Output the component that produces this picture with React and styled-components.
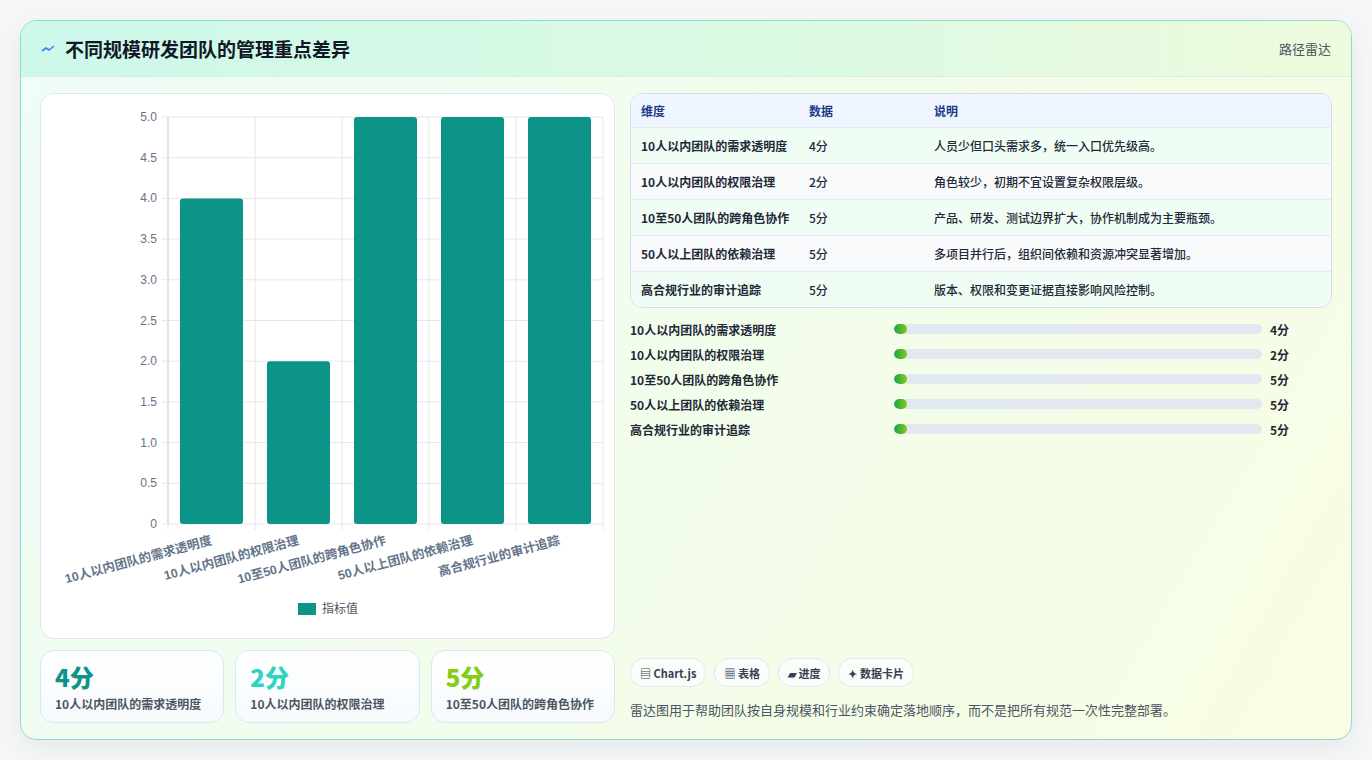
import styled, { createGlobalStyle } from 'styled-components'

const Global = createGlobalStyle`
  body {
    margin: 0;
    background: #f4f6f8;
    font-family: "Noto Sans CJK SC", "Noto Sans", sans-serif;
  }
`

const items = [
  { name: '10人以内团队的需求透明度', value: 4, note: '人员少但口头需求多，统一入口优先级高。' },
  { name: '10人以内团队的权限治理', value: 2, note: '角色较少，初期不宜设置复杂权限层级。' },
  { name: '10至50人团队的跨角色协作', value: 5, note: '产品、研发、测试边界扩大，协作机制成为主要瓶颈。' },
  { name: '50人以上团队的依赖治理', value: 5, note: '多项目并行后，组织间依赖和资源冲突显著增加。' },
  { name: '高合规行业的审计追踪', value: 5, note: '版本、权限和变更证据直接影响风险控制。' },
]

const Page = styled.div`
  padding: 20px;
  height: 760px;
  box-sizing: border-box;
`

const Panel = styled.div`
  height: 720px;
  box-sizing: border-box;
  border: 1px solid #8fdcc8;
  border-radius: 16px;
  background: linear-gradient(120deg, #effdf8 0%, #f3fde9 60%, #f8fde4 100%);
  box-shadow: 0 8px 24px rgba(0, 0, 0, 0.06);
  overflow: hidden;
  display: flex;
  flex-direction: column;
`

const Header = styled.div`
  height: 55px;
  flex: none;
  display: flex;
  align-items: center;
  justify-content: space-between;
  padding: 0 20px;
  background: linear-gradient(90deg, #cdf8ea 0%, #dcfae3 60%, #eefadc 100%);
  border-bottom: 1px solid #d6efe4;
`

const Title = styled.h1`
  margin: 0;
  font-size: 19px;
  font-weight: 700;
  color: #111827;
  display: flex;
  align-items: center;
  gap: 10px;
`

const Tag = styled.span`
  font-size: 13px;
  color: #4b5563;
`

const Body = styled.div`
  flex: 1;
  display: grid;
  grid-template-columns: 575px 1fr;
  gap: 15px;
  padding: 16px 19px 18px 19px;
`

const Left = styled.div`
  display: flex;
  flex-direction: column;
  gap: 11px;
`

const ChartCard = styled.div`
  height: 544px;
  background: #fff;
  border: 1px solid #dfe8ec;
  border-radius: 14px;
`

const Cards = styled.div`
  display: grid;
  grid-template-columns: repeat(3, 1fr);
  gap: 11px;
`

const Stat = styled.div`
  height: 73px;
  box-sizing: border-box;
  padding: 10px 14px;
  border: 1px solid #d8e8ef;
  border-radius: 14px;
  background: linear-gradient(180deg, #ffffff, #f6fafd);
`

const StatValue = styled.div`
  font-size: 24px;
  font-weight: 800;
  line-height: 32px;
  color: ${p => p.$color};
`

const StatLabel = styled.div`
  font-size: 12px;
  font-weight: 600;
  color: #4b5563;
  margin-top: 2px;
`

const Right = styled.div`
  display: flex;
  flex-direction: column;
`

const Table = styled.div`
  border: 1px solid #cfdde8;
  border-radius: 12px;
  overflow: hidden;
  background: #fff;
`

const Row = styled.div`
  display: grid;
  grid-template-columns: 168px 125px 1fr;
  align-items: center;
  height: ${p => (p.$head ? '33px' : '35px')};
  padding: 0 10px;
  font-size: 12px;
  font-weight: ${p => (p.$head ? 600 : 500)};
  color: ${p => (p.$head ? '#1e3a8a' : '#1f2937')};
  background: ${p => (p.$head ? '#eff6ff' : p.$odd ? '#f8fafc' : '#f0fdf4')};
  border-top: ${p => (p.$head ? 'none' : '1px solid #e3eaf0')};
  & > span:first-child { font-weight: 600; }
`

const Bars = styled.div`
  margin-top: 12px;
  display: flex;
  flex-direction: column;
  gap: 7px;
`

const BarRow = styled.div`
  display: grid;
  grid-template-columns: 264px 368px 1fr;
  align-items: center;
  height: 18px;
  font-size: 12px;
  font-weight: 600;
  color: #1f2937;
  & > span:last-child { padding-left: 8px; font-weight: 700; }
`

const Track = styled.div`
  height: 10px;
  border-radius: 5px;
  background: #e2e8f0;
  overflow: hidden;
`

const Fill = styled.div`
  height: 100%;
  border-radius: 5px;
  background: linear-gradient(90deg, #16a34a, #84cc16);
`

const Spacer = styled.div`
  flex: 1;
`

const Chips = styled.div`
  display: flex;
  gap: 8px;
`

const Chip = styled.span`
  height: 27px;
  padding: 0 9px;
  display: inline-flex;
  align-items: center;
  gap: 4px;
  border: 1px solid #e2e8f0;
  border-radius: 14px;
  background: #fbfdfb;
  font-size: 11px;
  font-weight: 700;
  color: #374151;
`

const Desc = styled.p`
  margin: 13px 0 4px;
  font-size: 13px;
  color: #4b5563;
`

function Chart() {
  const x0 = 127, x1 = 562, y0 = 23, y1 = 430
  const cw = (x1 - x0) / 5
  const ticks = [0, 0.5, 1, 1.5, 2, 2.5, 3, 3.5, 4, 4.5, 5]
  const yOf = v => y1 - (v / 5) * (y1 - y0)
  return (
    <svg width="574" height="544" fontFamily='"Liberation Sans", "Noto Sans CJK SC", sans-serif'>
      {ticks.map(t => (
        <g key={t}>
          <line x1={x0 - 6} x2={x1} y1={yOf(t)} y2={yOf(t)} stroke="#e5e7eb" />
          <text x={x0 - 11} y={yOf(t) + 4} fontSize="12" fill="#6b7280" textAnchor="end">
            {t === 0 ? '0' : t.toFixed(1)}
          </text>
        </g>
      ))}
      {[0, 1, 2, 3, 4, 5].map(i => (
        <line key={i} x1={x0 + i * cw} x2={x0 + i * cw} y1={y0} y2={y1 + 6} stroke="#e5e7eb" />
      ))}
      <line x1={x0} x2={x0} y1={y0} y2={y1} stroke="#d1d5db" />
      {items.map((it, i) => {
        const cx = x0 + cw * i + cw / 2
        return (
          <g key={it.name}>
            <rect x={cx - 31.5} y={yOf(it.value)} width="63" height={y1 - yOf(it.value)} rx="3" fill="#0d9488" />
            <text
              x={cx + 1}
              y={y1 + 20}
              fontSize="12.5"
              fontWeight="600"
              fill="#64748b"
              textAnchor="end"
              transform={`rotate(-15 ${cx + 1} ${y1 + 20})`}
            >
              {it.name}
            </text>
          </g>
        )
      })}
      <rect x="257" y="509" width="18" height="12" fill="#0d9488" />
      <text x="281" y="519" fontSize="12" fill="#4b5563">指标值</text>
    </svg>
  )
}

export default function App() {
  const colors = ['#0d9488', '#2dd4bf', '#84cc16']
  return (
    <Page>
      <Global />
      <Panel>
        <Header>
          <Title>
            <svg width="14" height="10" viewBox="0 0 14 10">
              <path d="M1 7 L5 4 L8 6 L13 2" stroke="#3b82f6" strokeWidth="1.6" fill="none" />
            </svg>
            不同规模研发团队的管理重点差异
          </Title>
          <Tag>路径雷达</Tag>
        </Header>
        <Body>
          <Left>
            <ChartCard>
              <Chart />
            </ChartCard>
            <Cards>
              {items.slice(0, 3).map((it, i) => (
                <Stat key={it.name}>
                  <StatValue $color={colors[i]}>{it.value}分</StatValue>
                  <StatLabel>{it.name}</StatLabel>
                </Stat>
              ))}
            </Cards>
          </Left>
          <Right>
            <Table>
              <Row $head>
                <span>维度</span>
                <span>数据</span>
                <span>说明</span>
              </Row>
              {items.map((it, i) => (
                <Row key={it.name} $odd={i % 2 === 1}>
                  <span>{it.name}</span>
                  <span>{it.value}分</span>
                  <span>{it.note}</span>
                </Row>
              ))}
            </Table>
            <Bars>
              {items.map(it => (
                <BarRow key={it.name}>
                  <span>{it.name}</span>
                  <Track>
                    <Fill style={{ width: `${it.value > 0 ? 3.5 : 0}%` }} />
                  </Track>
                  <span>{it.value}分</span>
                </BarRow>
              ))}
            </Bars>
            <Spacer />
            <Chips>
              <Chip>▤ Chart.js</Chip>
              <Chip>▦ 表格</Chip>
              <Chip>▰ 进度</Chip>
              <Chip>✦ 数据卡片</Chip>
            </Chips>
            <Desc>雷达图用于帮助团队按自身规模和行业约束确定落地顺序，而不是把所有规范一次性完整部署。</Desc>
          </Right>
        </Body>
      </Panel>
    </Page>
  )
}
